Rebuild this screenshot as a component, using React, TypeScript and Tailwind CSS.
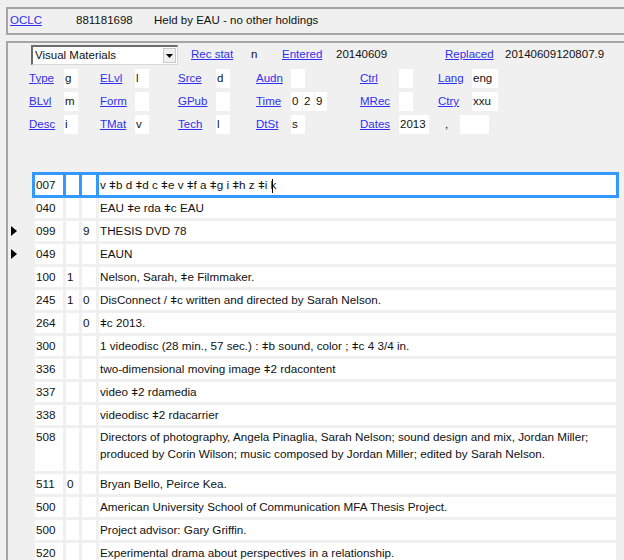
import type { ReactNode } from 'react'

type VarField = {
    tag: string
    i1?: string
    i2?: string
    data: ReactNode
    marker?: boolean
    active?: boolean
    tall?: boolean
}

const fields: VarField[] = [
    {
        tag: '007',
        data: (
            <>
                v ǂb d ǂd c ǂe v ǂf a ǂg i ǂh z ǂi k
                <span className="inline-block w-px h-[14px] bg-black align-middle -ml-[4px]" />
            </>
        ),
        active: true,
    },
    { tag: '040', data: 'EAU ǂe rda ǂc EAU' },
    { tag: '099', i2: '9', data: 'THESIS DVD 78', marker: true },
    { tag: '049', data: 'EAUN', marker: true },
    { tag: '100', i1: '1', data: 'Nelson, Sarah, ǂe Filmmaker.' },
    { tag: '245', i1: '1', i2: '0', data: 'DisConnect / ǂc written and directed by Sarah Nelson.' },
    { tag: '264', i2: '0', data: 'ǂc 2013.' },
    { tag: '300', data: '1 videodisc (28 min., 57 sec.) : ǂb sound, color ; ǂc 4 3/4 in.' },
    { tag: '336', data: 'two-dimensional moving image ǂ2 rdacontent' },
    { tag: '337', data: 'video ǂ2 rdamedia' },
    { tag: '338', data: 'videodisc ǂ2 rdacarrier' },
    {
        tag: '508',
        data: 'Directors of photography, Angela Pinaglia, Sarah Nelson; sound design and mix, Jordan Miller; produced by Corin Wilson; music composed by Jordan Miller; edited by Sarah Nelson.',
        tall: true,
    },
    { tag: '511', i1: '0', data: 'Bryan Bello, Peirce Kea.' },
    { tag: '500', data: 'American University School of Communication MFA Thesis Project.' },
    { tag: '500', data: 'Project advisor: Gary Griffin.' },
    { tag: '520', data: 'Experimental drama about perspectives in a relationship.' },
]

function Label({ children }: { children: ReactNode }) {
    return <a className="text-[#3030f0] underline underline-offset-1 cursor-pointer">{children}</a>
}

function Box({ children, className = 'w-[14px]' }: { children?: ReactNode; className?: string }) {
    return <div className={`bg-white h-[19px] leading-[19px] pl-[1px] ${className}`}>{children}</div>
}

// one fixed-field column: label + value box(es)
function Col({
    label,
    width,
    labelWidth,
    children,
}: {
    label: string
    width: string
    labelWidth: string
    children?: ReactNode
}) {
    return (
        <div className={`flex items-center ${width}`}>
            <span className={labelWidth}>
                <Label>{label}</Label>
            </span>
            {children}
        </div>
    )
}

function Marker() {
    return (
        <svg width="7" height="10" viewBox="0 0 7 10">
            <polygon points="0,0 6,5 0,10" fill="#000" />
        </svg>
    )
}

function FieldRow({ f }: { f: VarField }) {
    const h = f.tall ? 'h-[43px]' : 'h-[20px]'
    const cell = `bg-white pl-[1px] ${f.tall ? 'leading-[17px] pt-0' : 'leading-[20px]'}`
    return (
        <div className={`flex ${h}`}>
            <div className="w-[27px] flex items-center pl-[3px]">{f.marker && <Marker />}</div>
            <div
                className={`flex gap-[3px] w-[581px] text-[11.7px] ${
                    f.active ? 'bg-[#3399ff] ring-[3px] ring-[#3399ff]' : ''
                }`}
            >
                <div className={`${cell} w-[28px]`}>{f.tag}</div>
                <div className={`${cell} w-[13px]`}>{f.i1}</div>
                <div className={`${cell} w-[14px]`}>{f.i2}</div>
                <div className={`${cell} flex-1 whitespace-normal`}>{f.data}</div>
            </div>
        </div>
    )
}

export default function App() {
    return (
        <div
            className="w-[624px] h-[560px] overflow-hidden bg-[#f0f0f0] text-[11.5px] text-[#111]"
            style={{ fontFamily: '"Liberation Sans", Arial, sans-serif' }}
        >
            {/* record header */}
            <div className="mt-[7px] ml-[6px] w-[640px] h-[28px] border-2 border-[#a6a6a6] flex items-center pl-[2px]">
                <span className="w-[66px]">
                    <Label>OCLC</Label>
                </span>
                <span className="w-[78px]">881181698</span>
                <span>Held by EAU - no other holdings</span>
            </div>

            <div className="mt-[6px] ml-[6px] w-[640px] h-[540px] border-2 border-[#a6a6a6] pt-[2px]">
                {/* fixed fields */}
                <div className="flex flex-col gap-[4px]">
                    <div className="flex items-center h-[20px] pl-[23px]">
                        <div className="relative w-[147px] h-[20px] bg-white border-t-2 border-l-2 border-[#6a6a6a] border-b border-r border-b-[#d8d8d8] border-r-[#d8d8d8] flex items-center">
                            <span className="pl-[2px] flex-1">Visual Materials</span>
                            <div className="w-[13px] h-[15px] mr-[1px] bg-[#f0f0f0] border border-[#c8c8c8] flex items-center justify-center">
                                <svg width="7" height="4" viewBox="0 0 7 4">
                                    <polygon points="0,0 7,0 3.5,4" fill="#000" />
                                </svg>
                            </div>
                        </div>
                        <div className="w-[13px]" />
                        <span className="w-[60px]">
                            <Label>Rec stat</Label>
                        </span>
                        <span className="w-[31px]">n</span>
                        <span className="w-[54px]">
                            <Label>Entered</Label>
                        </span>
                        <span className="w-[109px]">20140609</span>
                        <span className="w-[60px]">
                            <Label>Replaced</Label>
                        </span>
                        <span>20140609120807.9</span>
                    </div>

                    <div className="flex items-center h-[19px] pl-[21px]">
                        <Col label="Type" width="w-[71px]" labelWidth="w-[35px]">
                            <Box>g</Box>
                        </Col>
                        <Col label="ELvl" width="w-[78px]" labelWidth="w-[35px]">
                            <Box>l</Box>
                        </Col>
                        <Col label="Srce" width="w-[78px]" labelWidth="w-[38px]">
                            <Box>d</Box>
                        </Col>
                        <Col label="Audn" width="w-[104px]" labelWidth="w-[35px]">
                            <Box />
                        </Col>
                        <Col label="Ctrl" width="w-[78px]" labelWidth="w-[39px]">
                            <Box />
                        </Col>
                        <Col label="Lang" width="w-[100px]" labelWidth="w-[34px]">
                            <Box className="w-[26px]">eng</Box>
                        </Col>
                    </div>

                    <div className="flex items-center h-[19px] pl-[21px]">
                        <Col label="BLvl" width="w-[71px]" labelWidth="w-[35px]">
                            <Box>m</Box>
                        </Col>
                        <Col label="Form" width="w-[78px]" labelWidth="w-[35px]">
                            <Box />
                        </Col>
                        <Col label="GPub" width="w-[78px]" labelWidth="w-[38px]">
                            <Box />
                        </Col>
                        <Col label="Time" width="w-[104px]" labelWidth="w-[35px]">
                            <div className="flex gap-[1px]">
                                <Box className="w-[11px]">0</Box>
                                <Box className="w-[11px]">2</Box>
                                <Box className="w-[12px]">9</Box>
                            </div>
                        </Col>
                        <Col label="MRec" width="w-[78px]" labelWidth="w-[39px]">
                            <Box />
                        </Col>
                        <Col label="Ctry" width="w-[100px]" labelWidth="w-[34px]">
                            <Box className="w-[26px]">xxu</Box>
                        </Col>
                    </div>

                    <div className="flex items-center h-[19px] pl-[21px]">
                        <Col label="Desc" width="w-[71px]" labelWidth="w-[35px]">
                            <Box>i</Box>
                        </Col>
                        <Col label="TMat" width="w-[78px]" labelWidth="w-[35px]">
                            <Box>v</Box>
                        </Col>
                        <Col label="Tech" width="w-[78px]" labelWidth="w-[38px]">
                            <Box>l</Box>
                        </Col>
                        <Col label="DtSt" width="w-[104px]" labelWidth="w-[35px]">
                            <Box>s</Box>
                        </Col>
                        <Col label="Dates" width="w-[200px]" labelWidth="w-[39px]">
                            <Box className="w-[30px]">2013</Box>
                            <span className="w-[31px] pl-[16px]">,</span>
                            <Box className="w-[29px]" />
                        </Col>
                    </div>
                </div>

                {/* variable fields */}
                <div className="mt-[41px] flex flex-col gap-[3px]">
                    {fields.map((f, i) => (
                        <FieldRow key={i} f={f} />
                    ))}
                </div>
            </div>
        </div>
    )
}
